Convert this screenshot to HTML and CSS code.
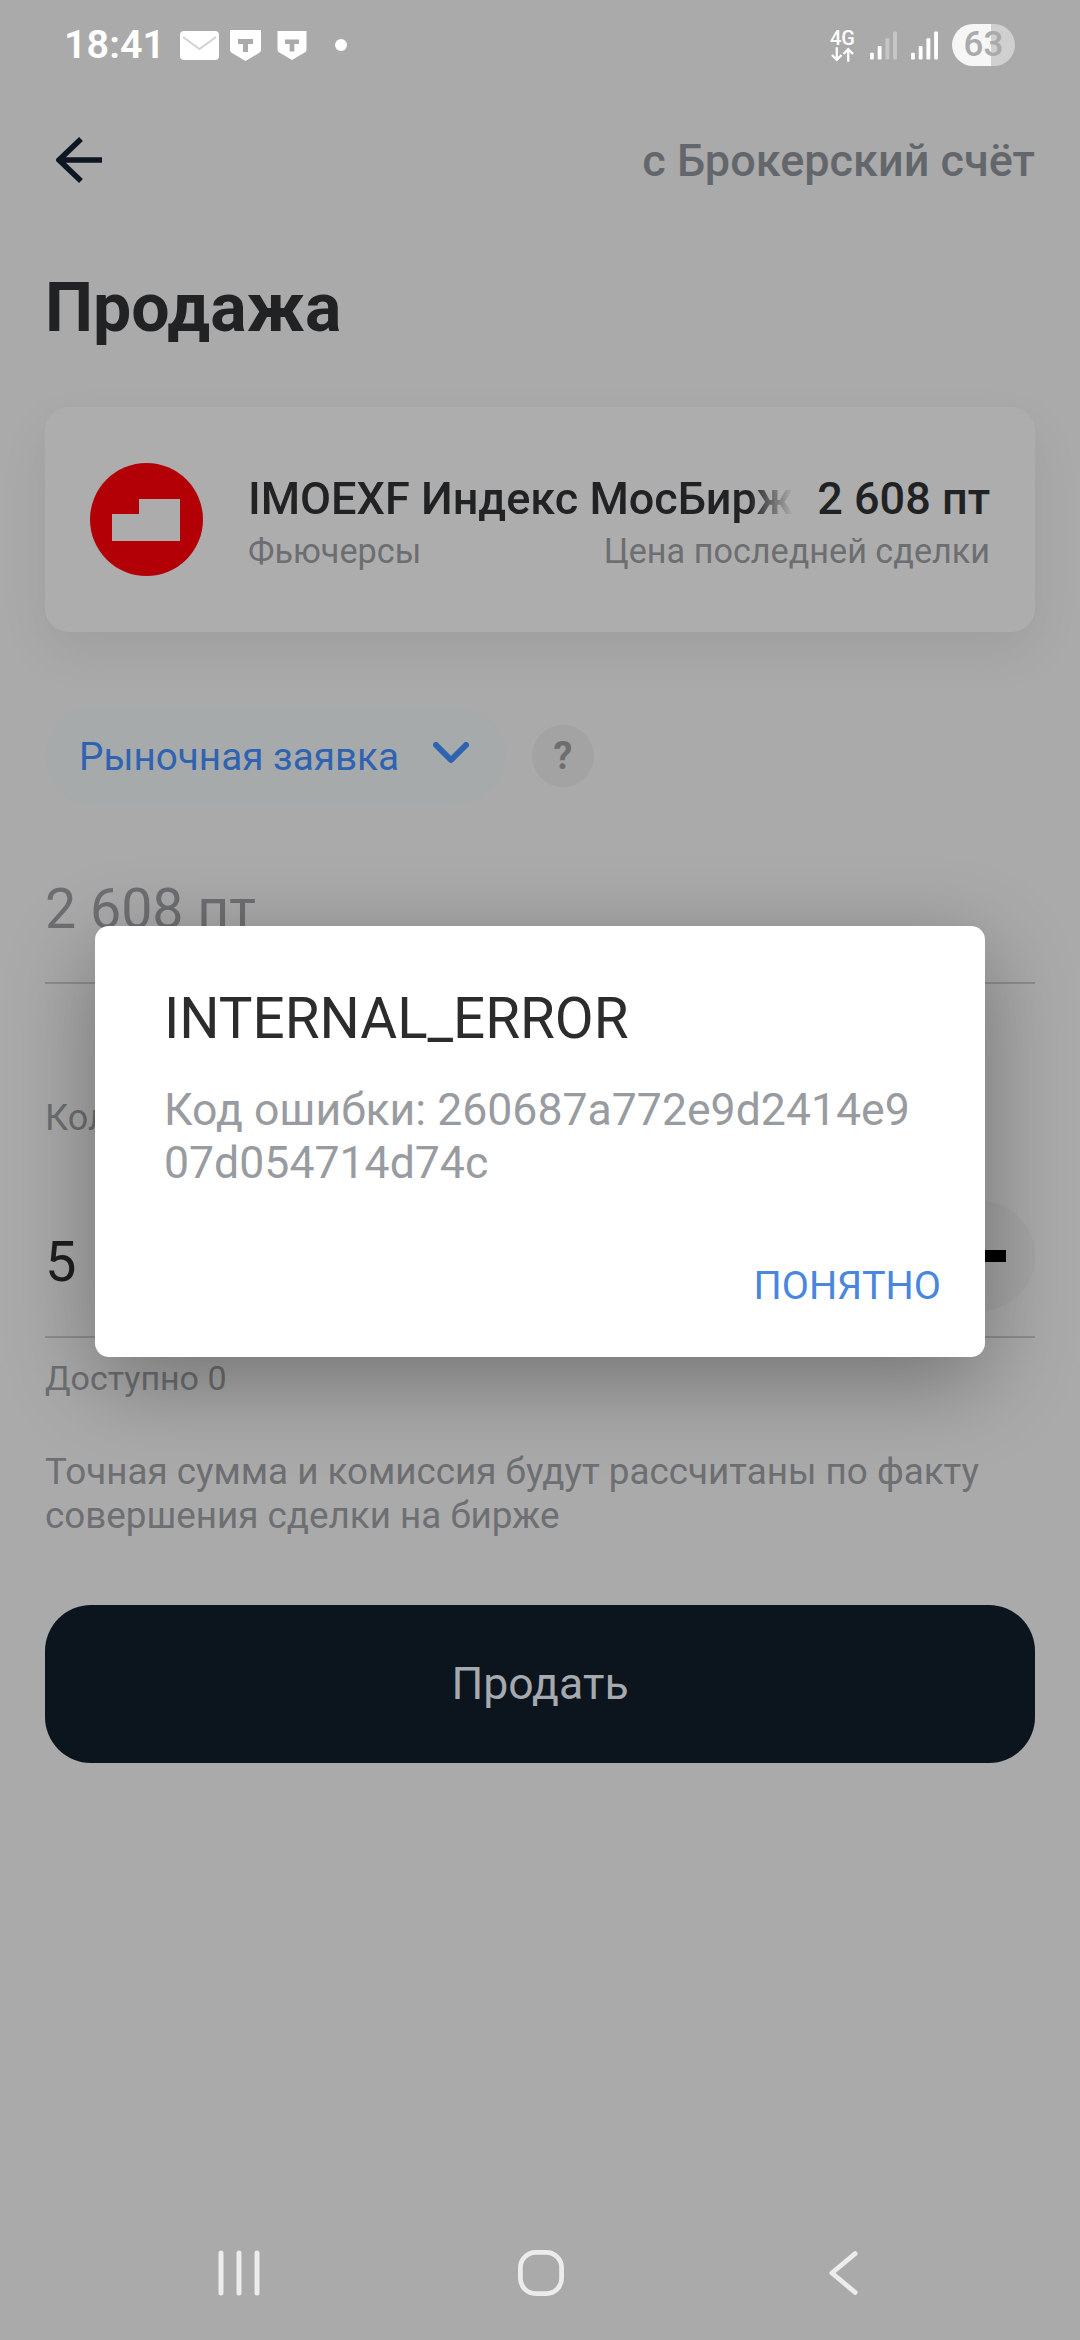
FILE: index.html
```html
<!DOCTYPE html>
<html lang="ru">
<head>
<meta charset="utf-8">
<title>Продажа</title>
<link rel="stylesheet" href="styles.css">
</head>
<body>
<div class="screen">
  <div class="status">
    <div class="status-left">
      <span class="time">18:41</span>
      <svg class="ic-mail" viewBox="0 0 39 29"><rect width="39" height="29" rx="4" fill="#fff"/><path fill="none" stroke="#d2d2d2" stroke-width="2" d="M3 6l16.500 12L36 6"/></svg>
      <svg class="ic-shield" viewBox="0 0 31 31"><path fill="#fff" d="M0 0h31v20q0 2-2 3L15.500 31 2 23q-2-1-2-3z"/><path fill="#aaa" d="M8 9h15v5h-5v8h-5v-8H8z"/></svg>
      <svg class="ic-shield second" viewBox="0 0 31 31"><path fill="#fff" d="M0 0h31v20q0 2-2 3L15.500 31 2 23q-2-1-2-3z"/><path fill="#aaa" d="M8 9h15v5h-5v8h-5v-8H8z"/></svg>
      <span class="dot"></span>
    </div>
    <div class="status-right">
      <div class="net"><span class="net-t">4G</span>
        <svg viewBox="0 0 24 15" class="net-a"><path fill="none" stroke="#fff" stroke-width="2.400" d="M6 0v13M1 8l5 5 5-5M18 15V2M13 7l5-5 5 5"/></svg>
      </div>
      <svg class="sig" viewBox="0 0 28 29"><rect x="0" y="22" width="4" height="7" rx="1" fill="#fff"/><rect x="8" y="15" width="4" height="14" rx="1" fill="#fff"/><rect x="16" y="7" width="4" height="22" rx="1" fill="#c6c6c6"/><rect x="24" y="0" width="4" height="29" rx="1" fill="#c6c6c6"/></svg>
      <svg class="sig" viewBox="0 0 28 29"><rect x="0" y="22" width="4" height="7" rx="1" fill="#fff"/><rect x="8" y="15" width="4" height="14" rx="1" fill="#fff"/><rect x="16" y="7" width="4" height="22" rx="1" fill="#fff"/><rect x="24" y="0" width="4" height="29" rx="1" fill="#fff"/></svg>
      <div class="batt">63</div>
    </div>
  </div>

  <div class="topbar">
    <svg class="back" viewBox="0 0 46 46"><path fill="none" stroke="#0e1621" stroke-width="5.500" d="M25 2L3 23l22 21M3 23h43"/></svg>
    <span class="account">с Брокерский счёт</span>
  </div>

  <h1 class="title">Продажа</h1>

  <section class="card">
    <svg class="logo" viewBox="0 0 113 113"><circle cx="56.500" cy="56.500" r="56.500" fill="#b30006"/><path fill="#acacac" d="M22 51h27V36h41v42H22z"/></svg>
    <div class="card-body">
      <div class="card-row">
        <span class="inst">IMOEXF Индекс МосБиржи</span>
        <span class="price">2 608 пт</span>
      </div>
      <div class="card-row">
        <span class="sub">Фьючерсы</span>
        <span class="sub">Цена последней сделки</span>
      </div>
    </div>
  </section>

  <div class="order">
    <div class="pill">
      <span>Рыночная заявка</span>
      <svg class="chev" viewBox="0 0 36 22"><path fill="none" stroke="#2f62b0" stroke-width="6" stroke-linecap="round" stroke-linejoin="round" d="M3 3l15 15L33 3"/></svg>
    </div>
    <div class="help">?</div>
  </div>

  <div class="field price-field"><span class="muted-big">2 608 пт</span></div>
  <div class="label">Количество</div>
  <div class="field qty">
    <span class="qty-val">5</span>
    <div class="stepper"><span class="minus"></span></div>
  </div>
  <div class="avail">Доступно 0</div>
  <p class="note">Точная сумма и комиссия будут рассчитаны по факту совершения сделки на бирже</p>
  <button class="sell">Продать</button>

  <nav class="nav">
    <svg class="nav-bars" viewBox="0 0 42 46"><path stroke="#ececec" stroke-width="5" stroke-linecap="round" d="M3 3v40M21 3v40M39 3v40"/></svg>
    <svg class="nav-home" viewBox="0 0 48 48"><rect x="2.500" y="2.500" width="43" height="43" rx="16" fill="none" stroke="#ececec" stroke-width="5"/></svg>
    <svg class="nav-back" viewBox="0 0 30 46"><path fill="none" stroke="#ececec" stroke-width="5" stroke-linecap="round" stroke-linejoin="round" d="M27 3L3 23l24 20"/></svg>
  </nav>

  <div class="dialog" role="dialog">
    <h2 class="dlg-title">INTERNAL_ERROR</h2>
    <p class="dlg-text">Код ошибки: 260687a772e9d2414e9<br>07d054714d74c</p>
    <div class="dlg-actions"><span class="dlg-btn">ПОНЯТНО</span></div>
  </div>
</div>
</body>
</html>
```
FILE: styles.css
```css
* { box-sizing: border-box; }
html, body { margin: 0; padding: 0; }
body { width: 1080px; height: 2340px; background: #aaaaaa; font-family: Roboto, "Liberation Sans", sans-serif; overflow: hidden; }
.screen { position: relative; width: 1080px; height: 2340px; padding: 0 45px; display: flex; flex-direction: column; }

.status { height: 90px; margin: 0 -45px; padding: 0 65px 0 64px; display: flex; justify-content: space-between; align-items: center; color: #fff; }
.status-left { display: flex; align-items: center; }
.time { font-size: 39.500px; font-weight: 600; line-height: 1; }
.ic-mail { width: 39px; height: 29px; margin-left: 15px; }
.ic-shield { width: 31px; height: 31px; margin-left: 11px; }
.ic-shield.second { width: 30px; height: 29px; margin-left: 16px; }
.dot { width: 12px; height: 12px; border-radius: 50%; background: #fff; margin-left: 28px; }
.status-right { display: flex; align-items: center; }
.net { width: 25px; display: flex; flex-direction: column; align-items: center; }
.net-t { font-size: 20px; font-weight: 500; line-height: 18px; }
.net-a { width: 23px; height: 15px; }
.sig { width: 27px; height: 29px; margin-left: 15px; }
.sig + .sig { margin-left: 14px; }
.batt { width: 63px; height: 42px; margin-left: 14px; border-radius: 21px; background: linear-gradient(90deg, #f6f6f6 0 62%, #d0d0d0 62%); color: #aaa; font-size: 35px; font-weight: 500; line-height: 42px; text-align: center; }

.topbar { height: 70px; margin-top: 35px; display: flex; justify-content: space-between; align-items: center; padding: 0 0 0 11px; }
.back { width: 46px; height: 46px; }
.account { font-size: 45px; font-weight: 500; color: #63676c; }

.title { margin: 77px 0 0; font-size: 68px; font-weight: 700; line-height: 72px; color: #212224; }

.card { margin-top: 63px; height: 225px; padding: 0 45px; border-radius: 24px; background: #adadad; box-shadow: 0 20px 50px rgba(0, 0, 0, .07); display: flex; align-items: center; }
.logo { width: 113px; height: 113px; flex: none; margin-right: 45px; }
.card-body { flex: 1; min-width: 0; display: flex; flex-direction: column; gap: 6px; margin-top: 4px; }
.card-row { display: flex; justify-content: space-between; align-items: baseline; }
.inst { width: 545px; flex: none; overflow: hidden; white-space: nowrap; font-size: 45px; font-weight: 500; line-height: 52px; color: #202224; -webkit-mask-image: linear-gradient(90deg, #000 92%, transparent 100%); mask-image: linear-gradient(90deg, #000 92%, transparent 100%); }
.price { font-size: 45px; font-weight: 500; line-height: 52px; color: #202224; white-space: nowrap; }
.sub { font-size: 34.200px; line-height: 40px; color: #6c6e71; }

.order { margin-top: 74px; display: flex; align-items: center; gap: 26px; }
.pill { width: 461px; height: 100px; border-radius: 50px; background: #a7aaab; padding: 0 37px 0 34px; display: flex; align-items: center; justify-content: space-between; color: #2f62b0; font-size: 38.700px; }
.chev { width: 36px; height: 22px; margin-top: -6px; }
.help { width: 62px; height: 62px; border-radius: 50%; background: #a3a3a3; color: #6e6e6e; display: flex; align-items: center; justify-content: center; font-size: 38px; font-weight: 700; }

.field { border-bottom: 2px solid #8c8d8e; display: flex; align-items: center; justify-content: space-between; }
.price-field { margin-top: 37px; height: 141px; align-items: flex-start; padding-top: 35px; }
.muted-big { font-size: 55.500px; line-height: 64px; color: #6d6f72; }
.label { margin-top: 112px; font-size: 36px; line-height: 44px; color: #6d6f72; }
.qty { margin-top: 48px; height: 150px; }
.qty-val { font-size: 56px; line-height: 64px; color: #1e1e1e; }
.stepper { width: 110px; height: 110px; border-radius: 50%; background: #a5a5a5; display: flex; align-items: center; justify-content: center; margin-bottom: 12px; }
.minus { width: 52px; height: 12px; background: #000; }
.avail { margin-top: 20px; font-size: 34px; line-height: 40px; color: #6d6f72; }
.note { margin: 52px 0 0; font-size: 36.800px; line-height: 44px; color: #6d6f72; }
.sell { margin-top: 67px; height: 158px; width: 100%; flex: none; border: 0; border-radius: 46px; background: #0c141d; color: #a6aaaf; font: 400 44.600px Roboto, "Liberation Sans", sans-serif; }

.nav { position: absolute; left: 0; right: 0; bottom: 44px; height: 46px; }
.nav-bars { position: absolute; left: 218px; width: 42px; height: 46px; }
.nav-home { position: absolute; left: 518px; width: 46px; height: 46px; }
.nav-back { position: absolute; left: 829px; width: 29px; height: 46px; }

.dialog { position: absolute; left: 95px; top: 926px; width: 890px; height: 431px; background: #fff; border-radius: 14px; padding: 61px 44px 0 69px; box-shadow: 0 24px 90px rgba(0, 0, 0, .33); display: flex; flex-direction: column; }
.dlg-title { margin: 0; font-size: 56.500px; font-weight: 400; line-height: 64px; color: #2c2c2c; }
.dlg-text { margin: 33px 0 0; font-size: 44.600px; line-height: 53px; color: #989ba0; white-space: nowrap; }
.dlg-actions { margin-top: 73px; display: flex; justify-content: flex-end; }
.dlg-btn { font-size: 39.600px; font-weight: 400; line-height: 46px; color: #4a86de; }
```
